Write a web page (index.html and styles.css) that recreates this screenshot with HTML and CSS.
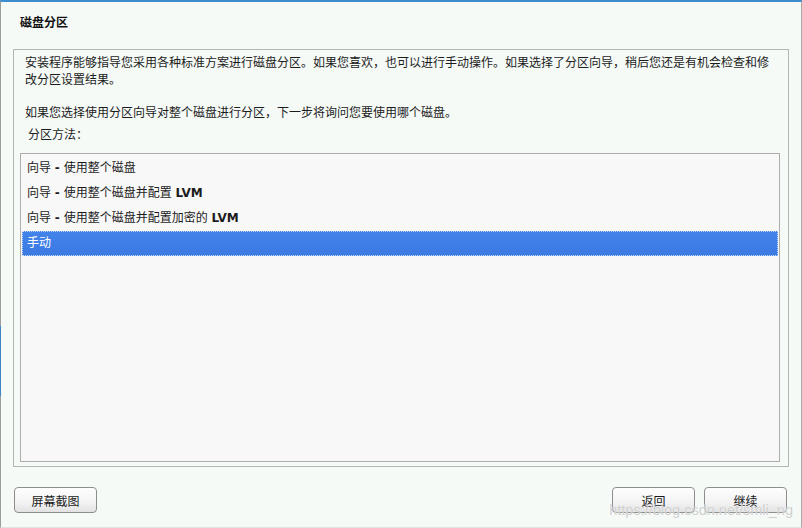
FILE: index.html
```html
<!DOCTYPE html>
<html lang="zh-CN">
<head>
    <meta charset="UTF-8">
    <title>磁盘分区</title>
    <link rel="stylesheet" href="styles.css">
</head>
<body>
    <div class="window">
        <h1 class="title">磁盘分区</h1>
        <div class="panel">
            <p class="intro">安装程序能够指导您采用各种标准方案进行磁盘分区。如果您喜欢，也可以进行手动操作。如果选择了分区向导，稍后您还是有机会检查和修改分区设置结果。</p>
            <p class="intro second">如果您选择使用分区向导对整个磁盘进行分区，下一步将询问您要使用哪个磁盘。</p>
            <div class="list-label">分区方法：</div>
            <ul class="method-list">
                <li>向导 <b>-</b> 使用整个磁盘</li>
                <li>向导 <b>-</b> 使用整个磁盘并配置 <b>LVM</b></li>
                <li>向导 <b>-</b> 使用整个磁盘并配置加密的 <b>LVM</b></li>
                <li class="selected">手动</li>
            </ul>
        </div>
        <div class="footer">
            <button class="btn">屏幕截图</button>
            <div class="nav-buttons">
                <button class="btn">返回</button>
                <button class="btn">继续</button>
            </div>
        </div>
        <div class="watermark">https://blog.csdn.net/smli_ng</div>
    </div>
</body>
</html>
```

FILE: styles.css
```css
html, body {
    margin: 0;
    padding: 0;
}
body {
    width: 802px;
    height: 528px;
    overflow: hidden;
    font-family: "DejaVu Sans", "Noto Sans CJK SC", sans-serif;
    font-size: 12px;
    color: #1c1c1c;
}
.window {
    position: relative;
    box-sizing: border-box;
    width: 802px;
    height: 528px;
    background: #f5faf7;
    border-top: 2px solid #3d8ccd;
    border-left: 1px solid #9c9c9c;
    border-right: 1px solid #a8a8a8;
    border-bottom: 1px solid #dfe4e1;
    display: flex;
    flex-direction: column;
}
.window::before {
    content: "";
    position: absolute;
    left: -1px;
    top: 324px;
    width: 1px;
    height: 70px;
    background: #3a86c8;
}
.title {
    margin: 0;
    height: 47px;
    box-sizing: border-box;
    padding: 13px 0 0 19px;
    font-size: 12px;
    font-weight: bold;
    line-height: 17px;
    color: #111;
}
.panel {
    box-sizing: border-box;
    height: 418px;
    margin: 0 12px;
    padding: 0 8px 4px 6px;
    border: 1px solid #b2b6b4;
    display: flex;
    flex-direction: column;
}
.intro {
    margin: 5px 0 0;
    padding: 0 5px;
    line-height: 17px;
}
.intro.second {
    margin-top: 16px;
}
.list-label {
    margin-top: 5px;
    padding-left: 8px;
    line-height: 17px;
}
.method-list {
    list-style: none;
    margin: 9px 0 0;
    padding: 2px 1px 1px;
    flex: 1;
    background: #f8f8f8;
    border: 1px solid #acacac;
}
.method-list li {
    box-sizing: border-box;
    height: 25px;
    line-height: 25px;
    padding-left: 5px;
    white-space: nowrap;
}
.method-list li.selected {
    background: linear-gradient(#4283ea, #3b7ae2);
    color: #fff;
    border: 1px dotted #c9dcf7;
    line-height: 23px;
    padding-left: 4px;
}
.footer {
    display: flex;
    justify-content: space-between;
    margin-top: 20px;
    padding: 0 14px 0 13px;
}
.nav-buttons {
    display: flex;
    gap: 9px;
}
.btn {
    width: 83px;
    height: 26px;
    padding: 0;
    font-family: "DejaVu Sans", "Noto Sans CJK SC", sans-serif;
    font-size: 12px;
    color: #1a1a1a;
    background: linear-gradient(#fefefe, #f3f3f3 60%, #e2e2e2);
    border: 1px solid #8e8e8e;
    border-radius: 4px;
}
.watermark {
    position: absolute;
    right: 8px;
    bottom: 9px;
    font-family: "Liberation Sans", sans-serif;
    font-size: 14.5px;
    color: rgba(190, 192, 191, 0.75);
    text-shadow: 0 0 1px #fff;
    pointer-events: none;
}
```
